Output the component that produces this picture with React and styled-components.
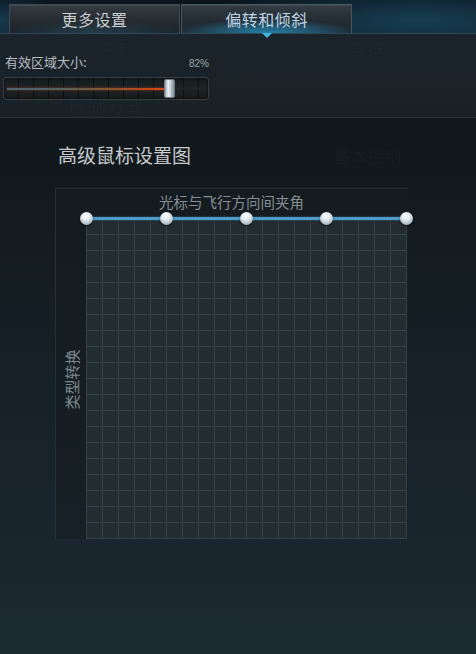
import React from "react"
import styled, { createGlobalStyle } from "styled-components"

const GlobalStyle = createGlobalStyle`
  html, body {
    margin: 0;
    padding: 0;
    background: #131a1f;
  }
  body {
    font-family: "Noto Sans CJK SC", "Noto Sans", sans-serif;
  }
`

const Page = styled.div`
  position: relative;
  width: 476px;
  height: 654px;
  overflow: hidden;
  background: linear-gradient(180deg, #101619 0%, #12191d 25%, #18232a 70%, #1c2a32 100%);
`

// top strip with the two tabs
const TabBar = styled.div`
  height: 33px;
  display: flex;
  align-items: flex-end;
  gap: 1px;
  padding-left: 9px;
  border-bottom: 1px solid #2f4653;
  background:
    radial-gradient(ellipse 220px 40px at 420px 20px, rgba(30, 90, 120, 0.55), transparent),
    radial-gradient(ellipse 60px 30px at 0px 20px, rgba(30, 90, 120, 0.5), transparent),
    linear-gradient(180deg, #0b141b 0%, #0f1e28 100%);
`

const Tab = styled.div`
  position: relative;
  width: 169px;
  height: 28px;
  display: flex;
  align-items: center;
  justify-content: center;
  font-size: 16px;
  letter-spacing: 0.5px;
  border: 1px solid ${p => (p.$active ? "#46565f" : "#3e4a51")};
  border-bottom: none;
  color: ${p => (p.$active ? "#bcd6e8" : "#c9cdd0")};
  background: ${p =>
    p.$active
      ? "radial-gradient(ellipse 90px 14px at 50% 100%, rgba(40, 160, 210, 0.75), transparent), linear-gradient(180deg, #333c42 0%, #222b31 60%, #1d2a33 100%)"
      : "radial-gradient(ellipse 90px 12px at 50% 100%, rgba(40, 110, 140, 0.35), transparent), linear-gradient(180deg, #343c41 0%, #242b30 60%, #1c2328 100%)"};
  box-shadow: inset 0 1px 0 rgba(255, 255, 255, 0.08);
`

const Pointer = styled.span`
  position: absolute;
  left: 50%;
  bottom: -5px;
  margin-left: -5px;
  width: 0;
  height: 0;
  border-left: 5px solid transparent;
  border-right: 5px solid transparent;
  border-top: 5px solid #3fb6de;
  z-index: 2;
`

const Panel = styled.div`
  height: 84px;
  padding: 19px 5px 0 3px;
  border-bottom: 1px solid #27333a;
  background: linear-gradient(180deg, #1b242a 0%, #192127 100%);
  box-sizing: border-box;
  display: flex;
  flex-direction: column;
`

const LabelRow = styled.div`
  width: 206px;
  display: flex;
  justify-content: space-between;
  align-items: baseline;
  padding-left: 2px;
  box-sizing: border-box;
`

const Label = styled.span`
  font-size: 13px;
  line-height: 18px;
  color: #b4bcc1;
`

const Value = styled.span`
  font-family: "Liberation Sans", Arial, sans-serif;
  font-size: 10px;
  color: #9aa5ab;
`

const Track = styled.div`
  position: relative;
  margin-top: 6px;
  width: 206px;
  height: 23px;
  box-sizing: border-box;
  border: 1px solid #373f45;
  border-radius: 3px;
  background:
    linear-gradient(180deg, transparent 0 9px, #1d2327 9px 12px, transparent 12px),
    repeating-linear-gradient(90deg, transparent 0 14px, rgba(0, 0, 0, 0.5) 14px 15px),
    linear-gradient(180deg, #161b1e 0%, #1d2225 50%, #161b1e 100%);
  box-shadow: inset 0 0 3px rgba(0, 0, 0, 0.8);
`

const Fill = styled.div`
  position: absolute;
  left: 3px;
  top: 10px;
  height: 2px;
  background: linear-gradient(90deg, #4b6878 0%, #56635e 35%, #86572a 65%, #cc4418 90%, #e8401a 100%);
  box-shadow: 0 0 3px rgba(230, 80, 30, 0.45);
`

const Thumb = styled.div`
  position: absolute;
  top: 1px;
  width: 11px;
  height: 19px;
  margin-left: -5px;
  box-sizing: border-box;
  border: 1px solid #6d7a82;
  border-radius: 2px;
  background: linear-gradient(90deg, #8fa0ab 0%, #eef3f6 35%, #c7d2d9 60%, #7b8c97 100%);
`

const Chart = styled.section`
  padding: 25px 0 0 55px;
`

const Title = styled.h2`
  margin: 0 0 21px 3px;
  font-size: 19px;
  line-height: 24px;
  font-weight: 400;
  color: #c8cbcd;
`

const Frame = styled.div`
  width: 352px;
  display: grid;
  grid-template-columns: 30px 321px;
  grid-template-rows: 29px 321px;
  border-top: 1px solid #262f34;
  border-left: 1px solid #262f34;
  background: linear-gradient(180deg, #141b1f 0%, #172026 100%);
`

const Caption = styled.div`
  grid-column: 2;
  display: flex;
  justify-content: center;
  align-items: center;
  margin-left: -30px;
  padding-bottom: 4px;
  font-size: 14.5px;
  color: #858e93;
`

const SideLabel = styled.div`
  grid-column: 1;
  grid-row: 2;
  display: flex;
  align-items: center;
  justify-content: center;
  font-size: 15px;
  color: #7f888d;
  span {
    white-space: nowrap;
    transform: rotate(-90deg) translateX(-1px);
  }
`

const Grid = styled.div`
  grid-column: 2;
  grid-row: 2;
  position: relative;
  background-color: #222c31;
  background-image:
    linear-gradient(90deg, #36424a 1px, transparent 1px),
    linear-gradient(180deg, #36424a 1px, transparent 1px);
  background-size: 16px 16px;
  box-shadow: inset -1px -1px 0 #36424a;
`

const Curve = styled.div`
  position: absolute;
  left: 0;
  right: 1px;
  top: -1px;
  height: 3px;
  background: #4f9ccc;
  box-shadow: 0 0 2px rgba(80, 160, 210, 0.6);
`

const Knob = styled.div`
  position: absolute;
  top: -6px;
  width: 13px;
  height: 13px;
  margin-left: -6px;
  border-radius: 50%;
  background: radial-gradient(circle at 45% 30%, #ffffff 0%, #e4ebef 35%, #a9b6bd 75%, #7e8c94 100%);
  box-shadow: 0 1px 2px rgba(0, 0, 0, 0.6);
`

// faint menu text that shows through the overlay
const Ghost = styled.span`
  position: absolute;
  left: ${p => p.$x}px;
  top: ${p => p.$y}px;
  font-size: ${p => p.$size || 17}px;
  color: rgba(150, 170, 180, 0.035);
  pointer-events: none;
`

const knobs = [0, 80, 160, 240, 320]

export default function App() {
  const value = 82

  return (
    <Page>
      <GlobalStyle />
      <TabBar>
        <Tab>更多设置</Tab>
        <Tab $active>
          偏转和倾斜
          <Pointer />
        </Tab>
      </TabBar>

      <Panel>
        <LabelRow>
          <Label>有效区域大小:</Label>
          <Value>{value}%</Value>
        </LabelRow>
        <Track>
          <Fill style={{ width: `${(value / 100) * 197 - 3}px` }} />
          <Thumb style={{ left: `${(value / 100) * 197 + 3}px` }} />
        </Track>
      </Panel>

      <Chart>
        <Title>高级鼠标设置图</Title>
        <Frame>
          <Caption>光标与飞行方向间夹角</Caption>
          <SideLabel>
            <span>类型转换</span>
          </SideLabel>
          <Grid>
            <Curve />
            {knobs.map(x => (
              <Knob key={x} style={{ left: `${x}px` }} />
            ))}
          </Grid>
        </Frame>
      </Chart>

      <Ghost $x={99} $y={36}>控制</Ghost>
      <Ghost $x={350} $y={36}>自键</Ghost>
      <Ghost $x={68} $y={91} $size={19}>控制方式</Ghost>
      <Ghost $x={333} $y={143}>基本控制</Ghost>
    </Page>
  )
}
